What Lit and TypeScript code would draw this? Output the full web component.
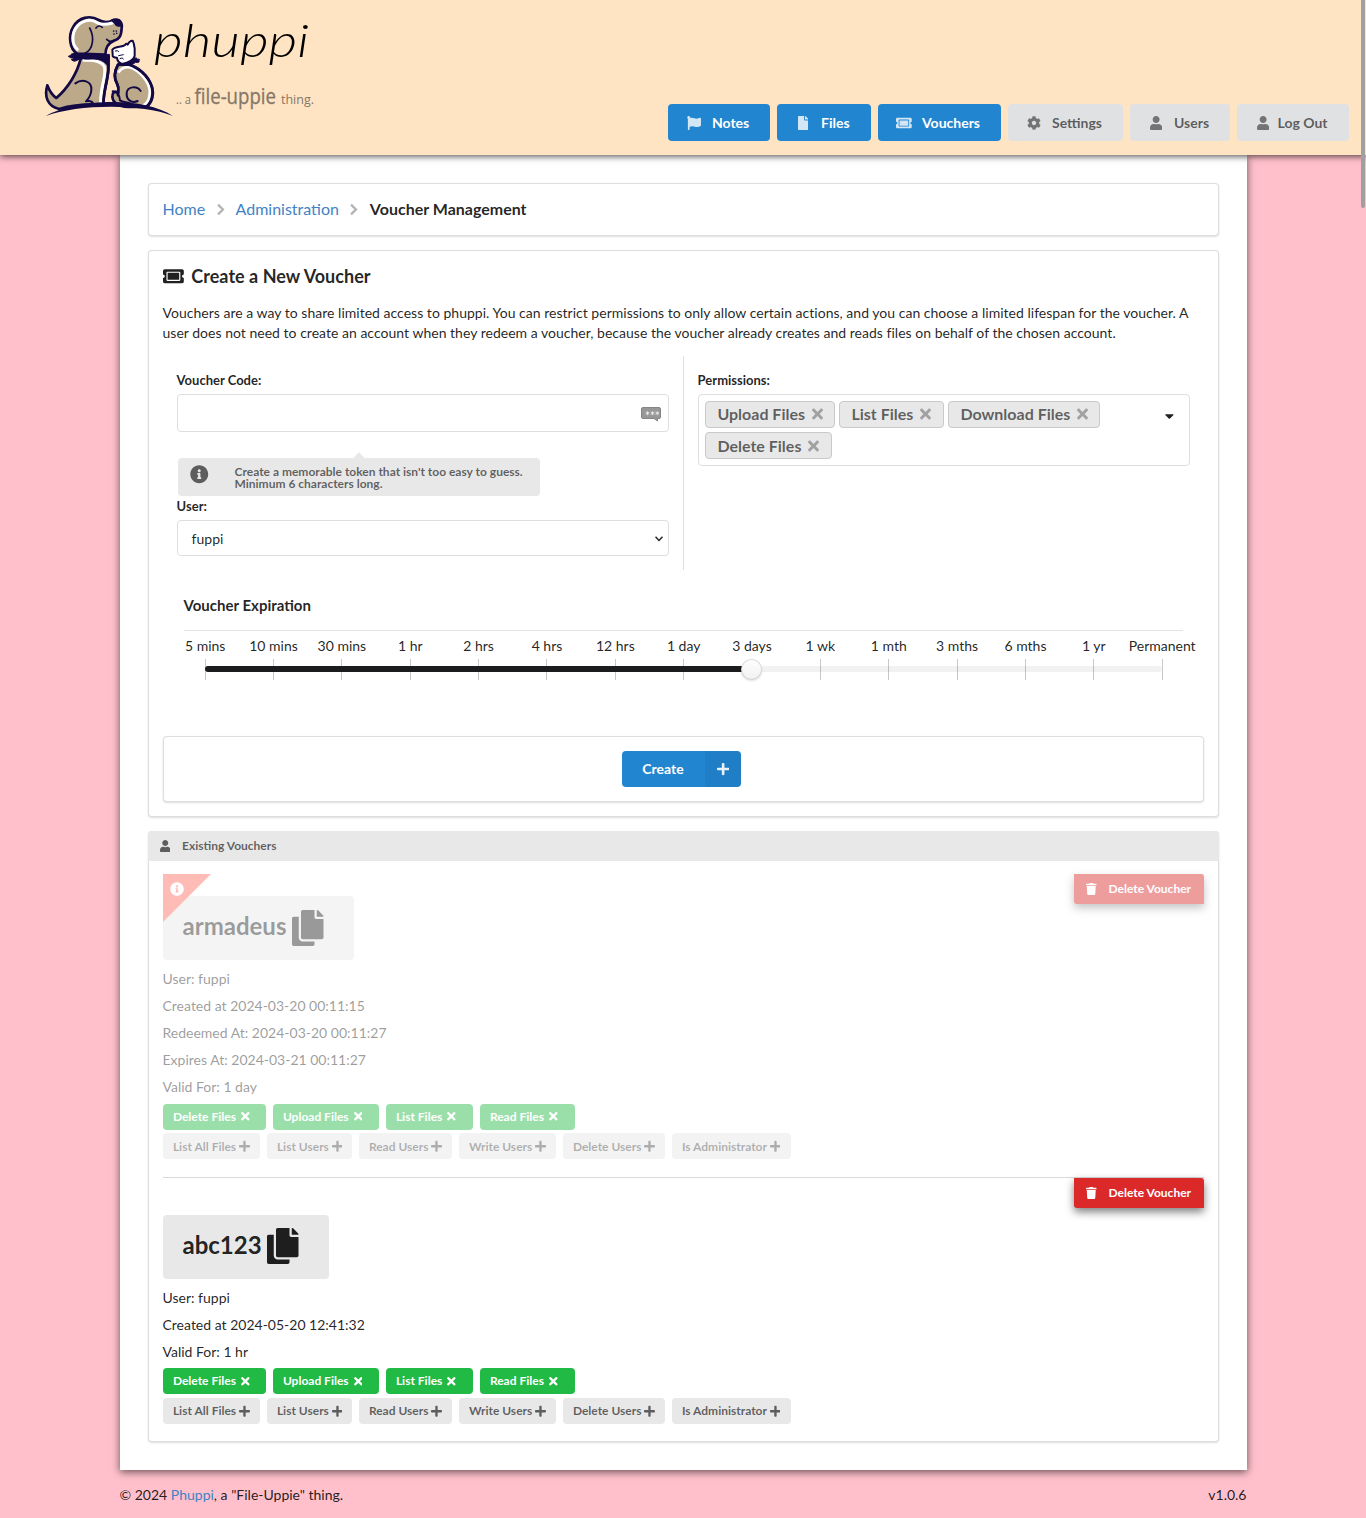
import { LitElement, html, css, svg } from "lit";
import { customElement, property } from "lit/decorators.js";

const ICONS: Record<string, [number, string]> = {
  user: [448, "M224 256c70.7 0 128-57.3 128-128S294.7 0 224 0 96 57.3 96 128s57.3 128 128 128zm89.6 32h-16.7c-22.2 10.2-46.9 16-72.9 16s-50.6-5.8-72.9-16h-16.7C60.2 288 0 348.2 0 422.4V464c0 26.5 21.5 48 48 48h352c26.5 0 48-21.5 48-48v-41.6c0-74.2-60.2-134.4-134.4-134.4z"],
  file: [384, "M224 136V0H24C10.7 0 0 10.7 0 24v464c0 13.3 10.7 24 24 24h336c13.3 0 24-10.7 24-24V160H248c-13.2 0-24-10.8-24-24zm160-14.1v6.1H256V0h6.1c6.4 0 12.5 2.5 17 7l97.9 98c4.5 4.5 7 10.6 7 16.9z"],
  flag: [512, "M349.565 98.783C295.978 98.783 251.721 64 184.348 64c-24.955 0-47.309 4.384-68.045 12.013a55.947 55.947 0 0 0 3.586-23.562C118.117 24.015 94.806 1.206 66.338.048 34.345-1.254 8 24.296 8 56c0 19.026 9.497 35.825 24 45.945V488c0 13.255 10.745 24 24 24h16c13.255 0 24-10.745 24-24v-94.4c28.311-12.064 63.582-22.122 114.435-22.122 53.588 0 97.844 34.783 165.217 34.783 48.169 0 86.667-16.294 122.505-40.858C506.84 359.452 512 349.571 512 339.045v-243.1c0-23.393-24.269-38.87-45.485-29.016-34.338 15.948-76.454 31.854-116.95 31.854z"],
  ticket: [576, "M128 160h320v192H128V160zm400 96c0 26.51 21.49 48 48 48v96c0 26.51-21.49 48-48 48H48c-26.51 0-48-21.49-48-48v-96c26.51 0 48-21.49 48-48s-21.49-48-48-48v-96c0-26.51 21.49-48 48-48h480c26.51 0 48 21.49 48 48v96c-26.51 0-48 21.49-48 48zm-48-104c0-13.255-10.745-24-24-24H120c-13.255 0-24 10.745-24 24v208c0 13.255 10.745 24 24 24h336c13.255 0 24-10.745 24-24V152z"],
  cog: [512, "M487.4 315.7l-42.6-24.6c4.3-23.2 4.3-47 0-70.2l42.6-24.6c4.9-2.8 7.1-8.6 5.5-14-11.1-35.6-30-67.8-54.7-94.6-3.8-4.1-10-5.1-14.8-2.3L380.8 110c-17.9-15.4-38.5-27.3-60.8-35.1V25.8c0-5.6-3.9-10.5-9.4-11.7-36.7-8.2-74.3-7.8-109.2 0-5.5 1.2-9.4 6.1-9.4 11.7V75c-22.2 7.9-42.8 19.8-60.8 35.1L88.7 85.5c-4.9-2.8-11-1.9-14.8 2.3-24.7 26.7-43.6 58.9-54.7 94.6-1.7 5.4.6 11.2 5.5 14L67.3 221c-4.3 23.2-4.3 47 0 70.2l-42.6 24.6c-4.9 2.8-7.1 8.6-5.5 14 11.1 35.6 30 67.8 54.7 94.6 3.8 4.1 10 5.1 14.8 2.3l42.6-24.6c17.9 15.4 38.5 27.3 60.8 35.1v49.2c0 5.6 3.9 10.5 9.4 11.7 36.7 8.2 74.3 7.8 109.2 0 5.5-1.2 9.4-6.1 9.4-11.7v-49.2c22.2-7.9 42.8-19.8 60.8-35.1l42.6 24.6c4.9 2.8 11 1.9 14.8-2.3 24.7-26.7 43.6-58.9 54.7-94.6 1.5-5.5-.7-11.3-5.6-14.1zM256 336c-44.1 0-80-35.9-80-80s35.9-80 80-80 80 35.9 80 80-35.9 80-80 80z"],
  info: [512, "M256 8C119.043 8 8 119.083 8 256c0 136.997 111.043 248 248 248s248-111.003 248-248C504 119.083 392.957 8 256 8zm0 110c23.196 0 42 18.804 42 42s-18.804 42-42 42-42-18.804-42-42 18.804-42 42-42zm56 254c0 6.627-5.373 12-12 12h-88c-6.627 0-12-5.373-12-12v-24c0-6.627 5.373-12 12-12h12v-64h-12c-6.627 0-12-5.373-12-12v-24c0-6.627 5.373-12 12-12h64c6.627 0 12 5.373 12 12v100h12c6.627 0 12 5.373 12 12v24z"],
  plus: [448, "M416 208H272V64c0-17.67-14.33-32-32-32h-32c-17.67 0-32 14.33-32 32v144H32c-17.67 0-32 14.33-32 32v32c0 17.67 14.33 32 32 32h144v144c0 17.67 14.33 32 32 32h32c17.67 0 32-14.33 32-32V304h144c17.67 0 32-14.33 32-32v-32c0-17.67-14.33-32-32-32z"],
  times: [352, "M242.72 256l100.07-100.07c12.28-12.28 12.28-32.19 0-44.48l-22.24-22.24c-12.28-12.28-32.19-12.28-44.48 0L176 189.28 75.93 89.21c-12.28-12.28-32.19-12.28-44.48 0L9.21 111.45c-12.28 12.28-12.28 32.19 0 44.48L109.28 256 9.21 356.07c-12.28 12.28-12.28 32.19 0 44.48l22.24 22.24c12.28 12.28 32.2 12.28 44.48 0L176 322.72l100.07 100.07c12.28 12.28 32.2 12.28 44.48 0l22.24-22.24c12.28-12.28 12.28-32.19 0-44.48L242.72 256z"],
  trash: [448, "M432 32H312l-9.4-18.7A24 24 0 0 0 281.1 0H166.8a23.72 23.72 0 0 0-21.4 13.3L136 32H16A16 16 0 0 0 0 48v32a16 16 0 0 0 16 16h416a16 16 0 0 0 16-16V48a16 16 0 0 0-16-16zM53.2 467a48 48 0 0 0 47.9 45h245.8a48 48 0 0 0 47.9-45L416 128H32z"],
  copy: [448, "M320 448v40c0 13.255-10.745 24-24 24H24c-13.255 0-24-10.745-24-24V120c0-13.255 10.745-24 24-24h72v296c0 30.879 25.121 56 56 56h168zm0-344V0H152c-13.255 0-24 10.745-24 24v368c0 13.255 10.745 24 24 24h272c13.255 0 24-10.745 24-24V128H344c-13.2 0-24-10.8-24-24zm120.971-31.029L375.029 7.029A24 24 0 0 0 358.059 0H352v96h96v-6.059a24 24 0 0 0-7.029-16.97z"],
  chevron: [320, "M70 90l166 166L70 422"],
  caret: [320, "M31.3 192h257.3c17.8 0 26.7 21.5 14.1 34.1L174.1 354.8c-7.8 7.8-20.5 7.8-28.3 0L17.2 226.1C4.6 213.5 13.5 192 31.3 192z"],
};

const icon = (name: string, size: number) => {
  const [w, d] = ICONS[name];
  const line = name === "chevron";
  return html`<svg class="icon" width=${(size * w) / 512} height=${size} viewBox="0 0 ${w} 512">
    ${line
      ? svg`<path d=${d} fill="none" stroke="currentColor" stroke-width="78" stroke-linecap="butt"></path>`
      : svg`<path d=${d} fill="currentColor"></path>`}
  </svg>`;
};

const shared = css`
  * { box-sizing: border-box; }
  .icon { display: block; flex: none; }
`;

@customElement("phuppi-logo")
class PhuppiLogo extends LitElement {
  static styles = css`
    :host { display: block; width: 300px; height: 125px; }
    svg { display: block; }
    .name { font: italic 300 46px Lato, sans-serif; fill: #000; }
    .tag { font-family: "Open Sans", "Noto Sans", sans-serif; fill: #857767; }
  `;
  render() {
    return html`<svg width="300" height="125" viewBox="30 0 300 125">
      <g transform="translate(40 8) scale(.33333)" fill="none" stroke="#130a45" stroke-width="8" stroke-linecap="round" stroke-linejoin="round">
        <path fill="#bca98a" d="M122 152C112 195 84 240 49 270C36 262 28 248 22 232C12 264 22 296 58 303C100 290 150 288 190 290C190 250 203 222 205 185L206 145Z"></path>
        <path stroke="#fff" stroke-width="9" stroke-linecap="butt" d="M128 157C160 155 186 160 193 176C201 200 180 235 182 288"></path>
        <path d="M202 150C214 195 190 235 190 290"></path>
        <path stroke-width="6" d="M106 226C126 212 156 218 154 246C153 262 146 272 138 280C148 278 158 280 161 290"></path>
        <path fill="#bca98a" d="M112 137C88 124 84 82 100 56C116 28 150 20 176 36C190 45 204 43 218 38C236 32 248 42 245 60C244 82 240 92 222 98C202 106 196 122 196 140Z"></path>
        <path stroke="#fff" stroke-width="9" d="M112 124C94 108 96 76 108 60C122 38 150 30 172 44C186 53 202 49 217 45"></path>
        <path stroke-width="5" d="M149 60C164 88 160 124 135 136M168 60Q176 49 187 58M200 94Q210 104 220 97"></path>
        <path fill="#130a45" stroke-width="4" d="M214 36C226 30 243 32 243 44C242 60 228 55 224 46Z"></path>
        <path fill="#130a45" stroke-width="3" d="M122 139C145 133 177 142 208 139L206 182C202 164 182 151 153 153Q132 155 121 150Q104 166 94 155Q104 151 106 150Q90 152 85 145Q97 142 94 138Q106 133 122 139Z"></path>
        <g fill="#130a45" stroke="none"><circle cx="221" cy="69" r="2.5"></circle><circle cx="229" cy="69" r="2.5"></circle><circle cx="222" cy="78" r="2.5"></circle><circle cx="230" cy="76" r="2.5"></circle></g>
        <path fill="#bca98a" d="M234 170C222 192 222 213 232 229C238 240 234 249 234 255C224 247 216 254 217 266C219 286 237 296 265 297L318 297C336 285 343 260 336 237C325 202 295 176 263 170Z"></path>
        <path stroke="#fff" stroke-width="8" stroke-linecap="butt" d="M235 194C245 177 264 174 278 181C308 197 332 229 329 258C328 277 319 288 306 295"></path>
        <path d="M263 169C304 182 337 217 338 253C337 277 330 289 318 297M234 170C222 192 222 213 232 229C238 240 234 249 234 262"></path>
        <path stroke-width="6" d="M302 249C291 233 262 234 260 255C258 279 279 286 293 279M218 250C230 250 238 260 240 277C253 286 268 278 281 294"></path>
        <path fill="#fff" stroke-width="6" d="M217 125C226 114 246 119 256 110Q260 104 263 110Q269 97 278 98Q283 108 284 122L284 144C280 159 260 165 246 168Q231 161 231 149Q216 149 218 140Z"></path>
        <path stroke-width="3" d="M226 129Q234 125 236 131M236 143L250 140M240 152Q248 147 250 153"></path>
        <path fill="#130a45" stroke-width="3" d="M236 168Q270 168 280 154Q291 145 291 154Q303 152 297 158Q300 165 287 163Q270 176 255 171Z"></path>
        <path fill="#130a45" stroke="none" d="M18 324C104 274 307 263 399 324C300 285 110 290 18 324Z"></path>
      </g>
      <text class="name" x="154" y="57" textLength="155" lengthAdjust="spacingAndGlyphs">phuppi</text>
      <text class="tag" x="176" y="104" font-size="13" textLength="15" lengthAdjust="spacingAndGlyphs">.. a</text>
      <text class="tag" x="194.500" y="104" font-size="21" textLength="81.500" lengthAdjust="spacingAndGlyphs" stroke="#857767" stroke-width=".3">file-uppie</text>
      <text class="tag" x="281" y="104" font-size="12.500" textLength="33" lengthAdjust="spacingAndGlyphs">thing.</text>
    </svg>`;
  }
}

interface Voucher {
  code: string;
  expired: boolean;
  facts: string[];
}

const GRANTED: [string, number][] = [["Delete Files", 103], ["Upload Files", 106], ["List Files", 87], ["Read Files", 95]];
const AVAILABLE: [string, number][] = [["List All Files", 97], ["List Users", 85], ["Read Users", 93], ["Write Users", 97], ["Delete Users", 102], ["Is Administrator", 119]];

@customElement("voucher-item")
class VoucherItem extends LitElement {
  @property({ attribute: false }) voucher!: Voucher;
  static styles = [shared, css`
    :host { display: block; position: relative; }
    .body { padding-top: 22px; }
    .later .body { padding-top: 37px; }
    .faded .fade { opacity: 0.45; }
    .delete { position: absolute; top: 0; right: 0; width: 130px; height: 30px; padding-left: 12px; display: flex; align-items: center; background: #db2828; color: #fff; font-size: 12px; font-weight: 700; border-radius: 0 3px 0 3px; box-shadow: 0 4px 8px rgba(0, 0, 0, 0.5); }
    .delete .icon { margin-right: 12px; }
    .corner { position: absolute; z-index: 1; left: 0; top: 0; width: 48px; height: 48px; padding: 7.500px 7px; color: #fff; background: #ffbbb6; clip-path: polygon(0 0, 100% 0, 0 100%); }
    .code { display: inline-flex; align-items: center; height: 64px; padding: 0 29.900px 0 19.500px; border-radius: 4px; background: #e8e8e8; color: rgba(0, 0, 0, 0.87); font-size: 24px; font-weight: 700; vertical-align: top; }
    .code .icon { margin-left: 6px; }
    .code span { margin-top: -5px; }
    .later .code .icon { margin-top: -2px; margin-left: 5.500px; }
    .facts { padding-top: 4.500px; }
    .fact { height: 27px; line-height: 27px; font-size: 14px; margin-left: -0.5px; }
    .chips { display: flex; gap: 7px; margin-top: 3.500px; }
    .chips.granted { margin-top: 4px; }
    .later .chips.granted { margin-top: 3.400px; }
    .later .chips { margin-top: 4px; }
    .chip { height: 26px; padding-left: 9.900px; display: flex; align-items: center; border-radius: 4px; font-size: 12px; font-weight: 700; background: #e8e8e8; color: rgba(0, 0, 0, 0.6); white-space: nowrap; }
    .chip .icon { margin-left: 2.600px; }
    .granted .chip { background: #21ba45; color: #fff; }
    .granted .chip .icon { margin-left: 5px; }
    .faded .chips:not(.granted) { opacity: 0.5; }
    .faded .chips:not(.granted) .chip { padding-top: 1px; }
  `];
  render() {
    const v = this.voucher;
    return html`<div class=${v.expired ? "faded" : "later"}>
      ${v.expired ? html`<div class="corner">${icon("info", 14)}</div>` : ""}
      <div class="delete fade">${icon("trash", 12)}<span>Delete Voucher</span></div>
      <div class="body">
        <div class="code fade"><span>${v.code}</span>${icon("copy", 36)}</div>
        <div class="facts fade">${v.facts.map((f) => html`<div class="fact">${f}</div>`)}</div>
        <div class="chips granted fade">${GRANTED.map(([t, w]) => html`<div class="chip" style="width:${w}px">${t}${icon("times", 12.5)}</div>`)}</div>
        <div class="chips">${AVAILABLE.map(([t, w]) => html`<div class="chip" style="width:${w}px">${t}${icon("plus", 12.5)}</div>`)}</div>
      </div>
    </div>`;
  }
}

const STEPS = ["5 mins", "10 mins", "30 mins", "1 hr", "2 hrs", "4 hrs", "12 hrs", "1 day", "3 days", "1 wk", "1 mth", "3 mths", "6 mths", "1 yr", "Permanent"];
const SELECTED = 8;

@customElement("expiry-slider")
class ExpirySlider extends LitElement {
  static styles = [shared, css`
    :host { display: block; position: relative; width: 1025.36px; }
    .steps { display: grid; grid-template-columns: repeat(15, 1fr); }
    .step { display: flex; flex-direction: column; align-items: center; white-space: nowrap; font-size: 14px; line-height: 20px; }
    .step::after { content: ""; width: 1px; height: 21px; margin-top: 3px; background: #c8c8c8; }
    .track { position: absolute; left: 34px; right: 34px; top: 30px; height: 6px; border-radius: 4px; background: rgba(0, 0, 0, 0.05); }
    .fill { height: 6px; border-radius: 4px; background: #1b1c1d; }
    .thumb { position: absolute; top: -7px; width: 21px; height: 21px; margin-left: -11.300px; border-radius: 50%; background: linear-gradient(#fff, #f1f1f1); box-shadow: 0 1px 2px rgba(34, 36, 38, 0.15), 0 0 0 1px rgba(34, 36, 38, 0.15) inset; }
  `];
  render() {
    const pct = (SELECTED / (STEPS.length - 1)) * 100;
    return html`<div class="steps">${STEPS.map((s) => html`<div class="step">${s}</div>`)}</div>
      <div class="track"><div class="fill" style="width:${pct}%"></div><div class="thumb" style="left:${pct}%"></div></div>`;
  }
}

const NAV: [string, string, boolean][] = [
  ["flag", "Notes", true],
  ["file", "Files", true],
  ["ticket", "Vouchers", true],
  ["cog", "Settings", false],
  ["user", "Users", false],
  ["user", "Log Out", false],
];
const NAV_WIDTHS = [102, 94, 123, 115, 100, 112];

const TAGS: [string, number][] = [["Upload Files", 130], ["List Files", 105], ["Download Files", 152], ["Delete Files", 127]];

const VOUCHERS: Voucher[] = [
  { code: "armadeus", expired: true, facts: ["User: fuppi", "Created at 2024-03-20 00:11:15", "Redeemed At: 2024-03-20 00:11:27", "Expires At: 2024-03-21 00:11:27", "Valid For: 1 day"] },
  { code: "abc123", expired: false, facts: ["User: fuppi", "Created at 2024-05-20 12:41:32", "Valid For: 1 hr"] },
];

@customElement("app-root")
class AppRoot extends LitElement {
  static styles = [shared, css`
    :host { display: block; position: relative; height: 1518px; overflow: hidden; background: #ffc0cb; font: 14px/20px Lato, sans-serif; color: rgba(0, 0, 0, 0.87); }
    a { color: #4183c4; text-decoration: none; }
    .header { position: relative; z-index: 2; height: 155px; padding-left: 30px; padding-right: 17px; background: #ffe4c4; box-shadow: 0 1px 7px rgba(0, 0, 0, 0.75); display: flex; justify-content: space-between; }
    .nav { display: flex; gap: 7px; margin-top: 104px; }
    .btn { height: 37px; padding-left: 18px; display: flex; align-items: center; border-radius: 4px; background: #e0e1e2; color: rgba(0, 0, 0, 0.6); font-weight: 700; white-space: nowrap; }
    .btn.primary { background: #2185d0; color: #fff; }
    .glyph { width: 16px; margin-right: 10px; display: flex; justify-content: center; opacity: 0.8; }
    .btn:last-child .glyph { margin-right: 6.500px; }
    .page { width: 1127px; height: 1315px; margin-left: 120px; padding: 28px; background: #fff; box-shadow: 0 2px 8px rgba(0, 0, 0, 0.6); }
    .card { border: 1px solid rgba(34, 36, 38, 0.15); border-radius: 4px; box-shadow: 0 1px 2px rgba(34, 36, 38, 0.15); background: #fff; margin-bottom: 14px; }
    .crumbs { height: 53px; padding: 0 0 2px 13.500px; display: flex; align-items: center; font-size: 16px; }
    .crumbs .icon { color: #b3b3b3; margin: 2px 10.500px 0; }
    .crumbs b { margin-left: 0.5px; }
    .create { height: 567px; padding: 15px 14px 14px; display: flex; flex-direction: column; }
    .title { display: flex; align-items: center; gap: 7.500px; height: 21px; font-size: 18px; font-weight: 700; letter-spacing: 0.03px; }
    .title span { margin-top: -2px; }
    .intro { margin: 16px -5px 13px -0.500px; letter-spacing: 0.019px; }
    .columns { display: grid; grid-template-columns: 520px 521px; height: 214px; }
    .col { padding: 14px 14px 0; }
    .col + .col { border-left: 1px solid #dedede; }
    .label { margin-left: -0.400px; font-size: 13px; font-weight: 700; line-height: 20px; height: 24px; }
    .input { height: 38px; border: 1px solid #dededf; border-radius: 4px; display: flex; align-items: center; justify-content: flex-end; padding-right: 6px; }
    .hint { position: relative; width: 362px; height: 38px; margin: 26px 0 0 1px; padding-left: 12px; display: flex; align-items: center; gap: 26px; background: #e8e8e8; border-radius: 4px; color: rgba(0, 0, 0, 0.6); font-size: 12px; line-height: 12px; font-weight: 700; }
    .hint::before { content: ""; position: absolute; left: 177px; top: -4px; width: 8px; height: 8px; transform: rotate(45deg); background: #e8e8e8; }
    .hint .icon { margin-top: -5px; }
    .hint span { margin-top: 2px; }
    .select { height: 36px; border: 1px solid #dededf; border-radius: 4px; padding: 1px 5px 0 13.600px; display: flex; align-items: center; justify-content: space-between; }
    .multi { height: 72px; border: 1px solid #dededf; border-radius: 4px; padding: 6px 20px 0 6px; display: flex; justify-content: space-between; }
    .tags { display: flex; flex-wrap: wrap; align-content: flex-start; gap: 4px; width: 410px; }
    .tag { height: 27px; padding: 0 0 1px 11.400px; display: flex; align-items: center; gap: 7px; border: 1px solid #c9c9c9; border-radius: 4px; background: #e8e8e8; color: rgba(0, 0, 0, 0.6); font-size: 16px; font-weight: 700; }
    .tag:last-child { padding-bottom: 0; padding-top: 1px; }
    .tag .icon { opacity: 0.5; }
    .multi > .icon { margin-top: 8px; margin-right: -5px; }
    .expiry { margin: 25px 21px 0 20.500px; height: 36px; border-bottom: 1px solid #e4e4e4; font-size: 15px; font-weight: 700; }
    expiry-slider { margin: 5px 0 0 8px; }
    .submit { height: 66px; margin: auto 0 0; padding-right: 4px; display: flex; align-items: center; justify-content: center; }
    .save { width: 119px; height: 36px; display: flex; border-radius: 4px; overflow: hidden; background: #2185d0; color: #fff; font-weight: 700; line-height: 36px; }
    .save span { width: 82px; margin-right: 1px; text-align: center; }
    .save i { width: 36px; display: flex; align-items: center; justify-content: center; background: rgba(0, 0, 0, 0.05); }
    .save .icon { opacity: 0.9; }
    .list { height: 611px; }
    .strip { height: 30px; margin: -1px -1px 13px; padding-left: 11.500px; display: flex; align-items: center; gap: 12px; border-radius: 4px 4px 0 0; background: #e8e8e8; color: rgba(0, 0, 0, 0.6); font-size: 12px; font-weight: 700; }
    .items { padding: 0 14px; }
    voucher-item + voucher-item { margin-top: 18px; border-top: 1px solid #d9d9d9; }
    .footer { display: flex; justify-content: space-between; width: 1127px; margin: 15px 0 0 119.500px; }
    .scroll { position: absolute; z-index: 3; right: 1px; top: 0; width: 4px; height: 208px; border-radius: 0 0 2px 2px; background: #a0a0a0; }
  `];
  render() {
    return html`
      <div class="header">
        <phuppi-logo></phuppi-logo>
        <div class="nav">
          ${NAV.map(([i, t, p], n) => html`<div class="btn ${p ? "primary" : ""}" style="width:${NAV_WIDTHS[n]}px"><span class="glyph">${icon(i, 14)}</span>${t}</div>`)}
        </div>
      </div>
      <div class="page">
        <div class="card crumbs"><a>Home</a>${icon("chevron", 15)}<a>Administration</a>${icon("chevron", 15)}<b>Voucher Management</b></div>
        <div class="card create">
          <div class="title">${icon("ticket", 18.5)}<span>Create a New Voucher</span></div>
          <div class="intro">Vouchers are a way to share limited access to phuppi. You can restrict permissions to only allow certain actions, and you can choose a limited lifespan for the voucher. A user does not need to create an account when they redeem a voucher, because the voucher already creates and reads files on behalf of the chosen account.</div>
          <div class="columns">
            <div class="col">
              <div class="label">Voucher Code:</div>
              <div class="input">
                <svg class="icon" width="22" height="17" viewBox="0 0 22 17">
                  <path d="M3 2.500H19Q20.500 2.500 20.500 4V12Q20.500 13.500 19 13.500H17.500V16L14 13.500H3Q1.500 13.500 1.500 12V4Q1.500 2.500 3 2.500Z" fill="#979797" stroke="#858585"></path>
                  <path d="M7.500 6.200v4M5.700 7.200l3.600 2M9.300 7.200l-3.600 2M12.500 6.200v4M10.700 7.200l3.600 2M14.300 7.200l-3.600 2M17.300 6.200v4M15.500 7.200l3.600 2M19.100 7.200l-3.600 2" stroke="#eee" stroke-width=".8"></path>
                </svg>
              </div>
              <div class="hint">${icon("info", 18.5)}<span>Create a memorable token that isn't too easy to guess.<br>Minimum 6 characters long.</span></div>
              <div class="label">User:</div>
              <div class="select"><span>fuppi</span>
                <svg class="icon" width="8" height="6" viewBox="0 0 8 6"><path d="M.5 .8L4 4.500L7.500 .8" fill="none" stroke="#222" stroke-width="1.500"></path></svg>
              </div>
            </div>
            <div class="col">
              <div class="label">Permissions:</div>
              <div class="multi">
                <div class="tags">${TAGS.map(([t, w]) => html`<div class="tag" style="width:${w}px">${t}${icon("times", 16)}</div>`)}</div>
                ${icon("caret", 14)}
              </div>
            </div>
          </div>
          <div class="expiry">Voucher Expiration</div>
          <expiry-slider></expiry-slider>
          <div class="card submit"><div class="save"><span>Create</span><i>${icon("plus", 14)}</i></div></div>
        </div>
        <div class="card list">
          <div class="strip">${icon("user", 12)}<span>Existing Vouchers</span></div>
          <div class="items">${VOUCHERS.map((v) => html`<voucher-item .voucher=${v}></voucher-item>`)}</div>
        </div>
      </div>
      <div class="footer"><span>© 2024 <a>Phuppi</a>, a "File-Uppie" thing.</span><span>v1.0.6</span></div>
      <div class="scroll"></div>
    `;
  }
}
